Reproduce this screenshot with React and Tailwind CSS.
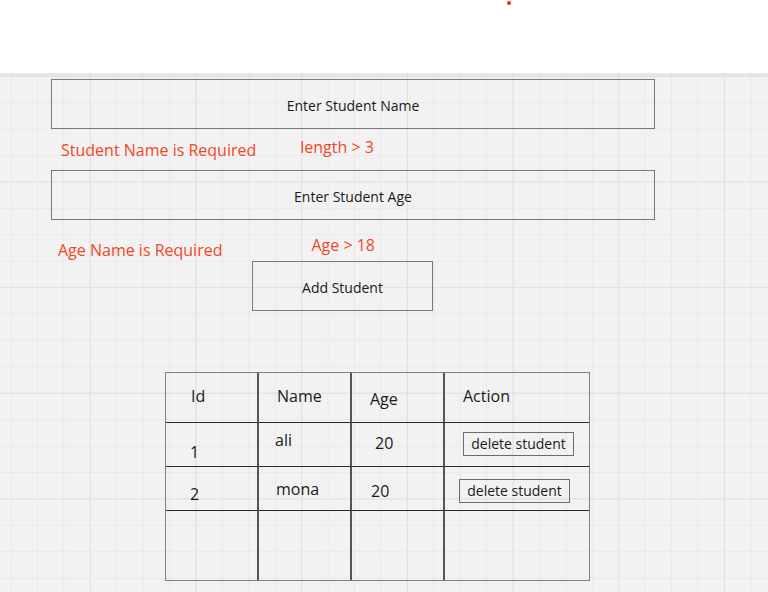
import React from "react";

const font = { fontFamily: '"Open Sans", "Noto Sans", sans-serif' };

function InputBox({ label }) {
  return (
    <div className="ml-[51px] w-[604px] h-[50px] pt-[3px] border-[1.5px] border-[#7a7a7a] flex items-center justify-center text-[14px] text-[#1a1a1a]">
      {label}
    </div>
  );
}

function DeleteButton() {
  return (
    <div className="w-[111px] h-[24px] border border-[#6b6b6b] flex items-center justify-center text-[14px] text-[#1a1a1a] leading-none">
      delete student
    </div>
  );
}

export default function App() {
  const cell = "text-[16px] leading-[20px] text-[#1a1a1a]";
  const colLine = "border-r-2 border-r-[#555555]";
  const rowLine = "border-b-[1.5px] border-b-[#2a2a2a]";

  return (
    <div className="w-[768px] h-[592px] overflow-hidden bg-white" style={font}>
      {/* top bar */}
      <div className="relative z-10 h-[73px] bg-white shadow-[0_1px_5px_rgba(0,0,0,0.09)]">
        <div className="absolute left-[507px] top-[1px] w-[4px] h-[4px] rounded-full bg-[#e8262a]" />
      </div>

      {/* board */}
      <div className="h-[519px] pt-[6px] bg-[#f2f2f2] bg-[image:linear-gradient(to_right,#e0e0e0_1px,transparent_1px),linear-gradient(to_bottom,#e0e0e0_1px,transparent_1px),linear-gradient(to_right,#e9e9e9_1px,transparent_1px),linear-gradient(to_bottom,#e9e9e9_1px,transparent_1px)] bg-[size:105.7px_105.7px,105.7px_105.7px,26.43px_26.43px,26.43px_26.43px] bg-[position:89.8px_2.7px]">
        <InputBox label="Enter Student Name" />

        <div className="h-[41px] flex text-[16px] leading-[22px] text-[#f24726]">
          <span className="ml-[61px] mt-[10px]">Student Name is Required</span>
          <span className="ml-[44px] mt-[7px]">length &gt; 3</span>
        </div>

        <InputBox label="Enter Student Age" />

        <div className="h-[41px] flex text-[16px] leading-[22px] text-[#f24726]">
          <span className="ml-[58px] mt-[19px]">Age Name is Required</span>
          <span className="ml-[89px] mt-[14px]">Age &gt; 18</span>
        </div>

        <div className="ml-[252px] w-[181px] h-[50px] pt-[3px] border-[1.5px] border-[#7a7a7a] flex items-center justify-center text-[14px] text-[#1a1a1a]">
          Add Student
        </div>

        {/* table */}
        <div className="ml-[165px] mt-[61px] w-[425px] border border-[#808080] grid grid-cols-[93px_93px_93px_1fr] grid-rows-[50px_44px_44px_1fr] h-[209px]">
          <div className={`${cell} ${colLine} ${rowLine} pl-[25px] pt-[13px]`}>Id</div>
          <div className={`${cell} ${colLine} ${rowLine} pl-[18px] pt-[13px]`}>Name</div>
          <div className={`${cell} ${colLine} ${rowLine} pl-[18px] pt-[16px]`}>Age</div>
          <div className={`${cell} ${rowLine} pl-[18px] pt-[13px]`}>Action</div>

          <div className={`${cell} ${colLine} ${rowLine} pl-[24px] pt-[19px]`}>1</div>
          <div className={`${cell} ${colLine} ${rowLine} pl-[16px] pt-[7px]`}>ali</div>
          <div className={`${cell} ${colLine} ${rowLine} pl-[23px] pt-[10px]`}>20</div>
          <div className={`${rowLine} pl-[18px] pt-[9px]`}>
            <DeleteButton />
          </div>

          <div className={`${cell} ${colLine} ${rowLine} pl-[24px] pt-[17px]`}>2</div>
          <div className={`${cell} ${colLine} ${rowLine} pl-[17px] pt-[12px]`}>mona</div>
          <div className={`${cell} ${colLine} ${rowLine} pl-[19px] pt-[14px]`}>20</div>
          <div className={`${rowLine} pl-[14px] pt-[12px]`}>
            <DeleteButton />
          </div>

          <div className={colLine} />
          <div className={colLine} />
          <div className={colLine} />
          <div />
        </div>
      </div>
    </div>
  );
}
